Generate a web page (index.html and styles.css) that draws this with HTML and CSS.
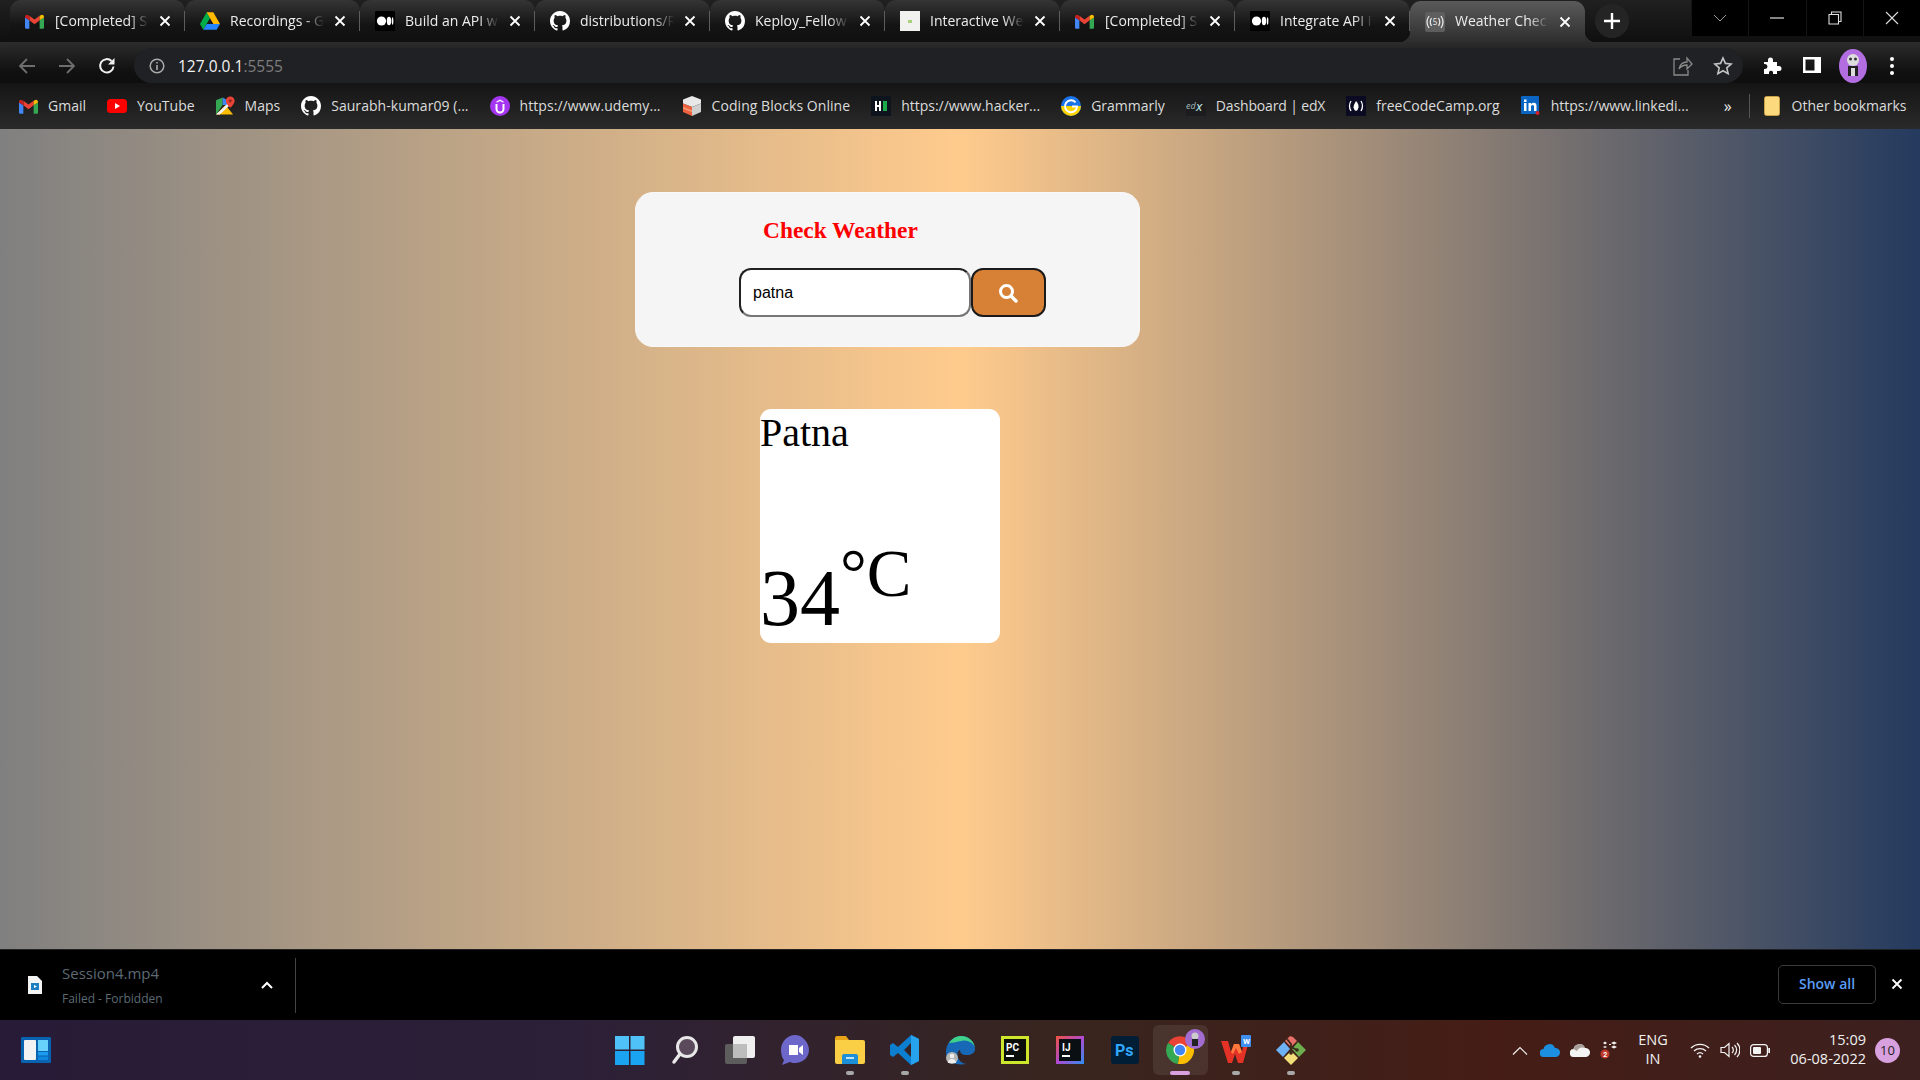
FILE: index.html
```html
<!DOCTYPE html>
<html>
	<head>
		<meta charset="utf-8">
		<title>Weather Check</title>
		<link rel="stylesheet" href="styles.css">
	</head>
	<body>
	<svg class="defs" width="0" height="0">
		<symbol id="gmail" viewBox="0 0 24 18">
			<path fill="#4285f4" d="M0 4v12.5A1.5 1.5 0 0 0 1.5 18h4V7.5z"/>
			<path fill="#34a853" d="M24 4v12.5a1.5 1.5 0 0 1-1.5 1.5h-4V7.5z"/>
			<path fill="#ea4335" d="M5.5 7.5V1.8L12 6.6l6.5-4.8v5.7L12 12.4z"/>
			<path fill="#c5221f" d="M0 4V3a2.5 2.5 0 0 1 4-2l1.5.8v5.7z"/>
			<path fill="#fbbc04" d="M24 4V3a2.5 2.5 0 0 0-4-2l-1.5.8v5.7z"/>
		</symbol>
		<symbol id="drive" viewBox="0 0 24 21">
			<path fill="#00ac47" d="M8 0L0 14l4 7 8-14z"/>
			<path fill="#ffba00" d="M8 0h8l8 14h-8z"/>
			<path fill="#2684fc" d="M4 21h16l4-7H8z"/>
		</symbol>
		<symbol id="medium" viewBox="0 0 20 20">
			<rect width="20" height="20" rx="1" fill="#000"/>
			<circle cx="6.5" cy="10" r="4.6" fill="#fff"/>
			<ellipse cx="14" cy="10" rx="2.2" ry="4.2" fill="#fff"/>
			<ellipse cx="17.6" cy="10" rx=".8" ry="3.8" fill="#fff"/>
		</symbol>
		<symbol id="github" viewBox="0 0 16 16">
			<path fill="#fff" d="M8 0C3.58 0 0 3.58 0 8c0 3.54 2.29 6.53 5.47 7.59.4.07.55-.17.55-.38 0-.19-.01-.82-.01-1.49-2.01.37-2.53-.49-2.69-.94-.09-.23-.48-.94-.82-1.13-.28-.15-.68-.52-.01-.53.63-.01 1.08.58 1.23.82.72 1.21 1.87.87 2.33.66.07-.52.28-.87.51-1.07-1.78-.2-3.64-.89-3.64-3.95 0-.87.31-1.59.82-2.15-.08-.2-.36-1.02.08-2.12 0 0 .67-.21 2.2.82.64-.18 1.32-.27 2-.27.68 0 1.36.09 2 .27 1.53-1.04 2.2-.82 2.2-.82.44 1.1.16 1.92.08 2.12.51.56.82 1.27.82 2.15 0 3.07-1.87 3.75-3.65 3.95.29.25.54.73.54 1.48 0 1.07-.01 1.93-.01 2.2 0 .21.15.46.55.38A8.013 8.013 0 0016 8c0-4.42-3.58-8-8-8z"/>
		</symbol>
		<symbol id="page" viewBox="0 0 20 20">
			<rect width="20" height="20" fill="#f1f1ef"/>
			<rect x="8" y="9" width="4" height="3" fill="#a8cf7a"/>
		</symbol>
		<symbol id="youtube" viewBox="0 0 20 14">
			<rect width="20" height="14" rx="3.5" fill="#f00"/>
			<path fill="#fff" d="M8 4l5 3-5 3z"/>
		</symbol>
		<symbol id="maps" viewBox="0 0 20 20">
			<path fill="#34a853" d="M0 4l7-3v8L0 19z"/>
			<path fill="#fbbc04" d="M0 19L10 9l8 10z"/>
			<path fill="#4285f4" d="M7 1l5 3 0 5-5 0z"/>
			<path fill="#f1f1f1" d="M0 19l18-17v4L4 19z"/>
			<path fill="#ea4335" d="M15 0a4.6 4.6 0 0 0-4.6 4.6C10.4 8 15 12 15 12s4.6-4 4.6-7.4A4.6 4.6 0 0 0 15 0z"/>
			<circle cx="15" cy="4.6" r="1.6" fill="#8f2a20"/>
		</symbol>
		<symbol id="udemy" viewBox="0 0 20 20">
			<circle cx="10" cy="10" r="10" fill="#a435f0"/>
			<path fill="none" stroke="#fff" stroke-width="2" d="M6.5 8v5a3.5 3.5 0 0 0 7 0V8"/>
			<path fill="#fff" d="M10 3.5l3.5 2v1.2L10 5 6.500 6.700V5.500z"/>
		</symbol>
		<symbol id="blocks" viewBox="0 0 20 20">
			<path fill="#e8e8e8" d="M10 0l9 3.500v4L10 11 1 7.500v-4z"/>
			<path fill="#f0623f" d="M1 7.500l9 3.500v9l-9-4z"/>
			<path fill="#f4a27f" d="M1 11l9 3.500V16L1 12.500z"/>
			<path fill="#cfcfcf" d="M19 7.500L10 11v9l9-4z"/>
		</symbol>
		<symbol id="hacker" viewBox="0 0 20 20">
			<rect width="20" height="20" fill="#0e141e"/>
			<path fill="#fff" d="M4 5h2v4h2V5h2v10H8v-4H6v4H4z"/>
			<rect x="12" y="5" width="4" height="10" fill="#1ba94c"/>
		</symbol>
		<symbol id="grammarly" viewBox="0 0 20 20">
			<circle cx="10" cy="10" r="10" fill="#1a73e8"/>
			<path fill="#fbd400" d="M0 10h20a10 10 0 0 1-20 0z"/>
			<path fill="none" stroke="#fff" stroke-width="2" d="M14.500 6.300A6 6 0 1 0 16 10.500H11"/>
		</symbol>
		<symbol id="fcc" viewBox="0 0 20 20">
			<rect width="20" height="20" fill="#0a0a23"/>
			<path fill="none" stroke="#fff" stroke-width="1.300" d="M5 5q-3 5 0 10M15 5q3 5 0 10"/>
			<path fill="#fff" d="M10 5q3 3 2.500 6.500Q12 14 10 15q-2-1-2.500-3.500Q7.500 9 10 5z"/>
		</symbol>
		<symbol id="linkedin" viewBox="0 0 20 20">
			<rect width="18" height="18" rx="1" fill="#0a66c2"/>
			<path fill="#fff" d="M3 7h2.500v8H3zM3 3.500h2.500V6H3zM7.500 7H10v1.200C10.500 7.400 11.500 6.800 12.700 6.800c2.300 0 2.800 1.500 2.800 3.500V15H13v-4.200c0-1-.2-1.900-1.300-1.900S10 9.800 10 10.800V15H7.500z"/>
			<circle cx="16.500" cy="17" r="2" fill="#d5202a"/>
		</symbol>
		<symbol id="folder" viewBox="0 0 16 20">
			<path fill="#fbd97c" stroke="#c9a247" d="M.5 2.500a2 2 0 0 1 2-2h11a2 2 0 0 1 2 2v15a2 2 0 0 1-2 2h-11a2 2 0 0 1-2-2z"/>
		</symbol>
		<symbol id="x" viewBox="0 0 12 12">
			<path stroke="#fff" stroke-width="1.800" d="M1.500 1.500l9 9M10.500 1.500l-9 9"/>
		</symbol>
		<symbol id="search" viewBox="0 0 20 20">
			<circle cx="8.500" cy="8.500" r="6" fill="none" stroke="#fff" stroke-width="3"/>
			<path stroke="#fff" stroke-width="3.400" stroke-linecap="round" d="M13.500 13.500l4.500 4.500"/>
		</symbol>
	</svg>

	<div class="browser">
		<div class="tabstrip">
			<div class="tab"><svg class="fav gm"><use href="#gmail"/></svg><span class="tabname">[Completed] S</span><svg class="tabx"><use href="#x"/></svg></div>
			<div class="tab"><svg class="fav"><use href="#drive"/></svg><span class="tabname">Recordings - G</span><svg class="tabx"><use href="#x"/></svg></div>
			<div class="tab"><svg class="fav"><use href="#medium"/></svg><span class="tabname">Build an API w</span><svg class="tabx"><use href="#x"/></svg></div>
			<div class="tab"><svg class="fav"><use href="#github"/></svg><span class="tabname">distributions/R</span><svg class="tabx"><use href="#x"/></svg></div>
			<div class="tab"><svg class="fav"><use href="#github"/></svg><span class="tabname">Keploy_Fellow</span><svg class="tabx"><use href="#x"/></svg></div>
			<div class="tab"><svg class="fav"><use href="#page"/></svg><span class="tabname">Interactive We</span><svg class="tabx"><use href="#x"/></svg></div>
			<div class="tab"><svg class="fav gm"><use href="#gmail"/></svg><span class="tabname">[Completed] S</span><svg class="tabx"><use href="#x"/></svg></div>
			<div class="tab"><svg class="fav"><use href="#medium"/></svg><span class="tabname">Integrate API i</span><svg class="tabx"><use href="#x"/></svg></div>
			<div class="tab active">
				<svg class="fav" viewBox="0 0 20 20">
					<rect width="20" height="20" rx="2" fill="#5e5e5e"/>
					<path fill="none" stroke="#e8e8e8" stroke-width="1.300" d="M4 4Q0 10 4 16M6.500 6Q4 10 6.500 14M16 4Q20 10 16 16M13.500 6Q16 10 13.500 14"/>
					<text x="10" y="13" text-anchor="middle" font-size="8" font-family="Noto Sans" fill="#e8e8e8">5</text>
				</svg>
				<span class="tabname">Weather Chec</span><svg class="tabx"><use href="#x"/></svg>
			</div>
			<div class="newtab"><svg width="18" height="18" viewBox="0 0 18 18"><path stroke="#fff" stroke-width="2.400" d="M9 1v16M1 9h16"/></svg></div>
			<div class="winbtns">
				<span class="winbtn"><svg width="14" height="8" viewBox="0 0 14 8"><path fill="none" stroke="#999" d="M1 1l6 6 6-6"/></svg></span>
				<span class="winbtn"><svg width="14" height="2" viewBox="0 0 14 2"><path stroke="#ddd" stroke-width="1.200" d="M0 1h14"/></svg></span>
				<span class="winbtn"><svg width="14" height="14" viewBox="0 0 14 14"><path fill="none" stroke="#ddd" stroke-width="1.100" d="M1 3.500h9.500V13H1zM3.500 3.500V1H13v9.500h-2.500"/></svg></span>
				<span class="winbtn"><svg width="14" height="14" viewBox="0 0 14 14"><path stroke="#ddd" stroke-width="1.100" d="M1 1l12 12M13 1L1 13"/></svg></span>
			</div>
		</div>

		<div class="toolbar">
			<svg class="navicon" viewBox="0 0 18 18"><path fill="none" stroke="#6e6e6e" stroke-width="1.800" d="M17 9H2M9 2L2 9l7 7"/></svg>
			<svg class="navicon" viewBox="0 0 18 18"><path fill="none" stroke="#6e6e6e" stroke-width="1.800" d="M1 9h15M9 2l7 7-7 7"/></svg>
			<svg class="navicon" viewBox="0 0 18 18"><path fill="none" stroke="#f0f0f0" stroke-width="2" d="M15.500 9.500A6.700 6.700 0 1 1 13.500 4"/><path fill="#f0f0f0" d="M16.500 1v6.500H10z"/></svg>
			<div class="omnibox">
				<svg class="infoicon" viewBox="0 0 16 16"><circle cx="8" cy="8" r="6.800" fill="none" stroke="#aaa" stroke-width="1.500"/><path stroke="#aaa" stroke-width="1.600" d="M8 7v5M8 4v1.600"/></svg>
				<span class="url">127.0.0.1<span class="port">:5555</span></span>
				<svg class="omniicon share" viewBox="0 0 20 20"><path fill="none" stroke="#8a8a8a" stroke-width="1.300" d="M7 3H1v16h14v-5M6 13c1-5 4-7 8-7V2l5 6-5 5V9c-3 0-6 1-8 4z"/></svg>
				<svg class="omniicon" viewBox="0 0 20 20"><path fill="none" stroke="#c4c4c4" stroke-width="1.600" d="M10 2l2.400 5.400 5.800.6-4.400 3.900 1.300 5.700L10 14.700l-5.100 2.900 1.300-5.700L1.800 8l5.800-.6z"/></svg>
			</div>
			<svg class="toolicon" viewBox="0 0 20 20"><path fill="#fff" d="M2 7h4V5a2.500 2.500 0 0 1 5 0v2h4v4h2a2.500 2.500 0 0 1 0 5h-2v3H11v-2a2.200 2.200 0 0 0-4 0v2H2v-5h1a2.500 2.500 0 0 0 0-5H2z"/></svg>
			<svg class="toolicon" viewBox="0 0 20 20"><path fill="#fff" d="M1 2h18v16H1zM3.500 4.500v11h9v-11z"/></svg>
			<div class="avatar"><svg width="28" height="34" viewBox="0 0 28 34"><ellipse cx="14" cy="17" rx="14" ry="17" fill="#b26ee0"/><circle cx="14" cy="11" r="6" fill="#ddd"/><path fill="#222" d="M9 17h10v10H9z"/><circle cx="11.500" cy="10" r="1.500" fill="#333"/><circle cx="16.500" cy="10" r="1.500" fill="#333"/><path fill="#ddd" d="M12 19h4v8h-4z"/></svg></div>
			<svg class="menuicon" viewBox="0 0 4 18"><circle cx="2" cy="2" r="2" fill="#fff"/><circle cx="2" cy="9" r="2" fill="#fff"/><circle cx="2" cy="16" r="2" fill="#fff"/></svg>
		</div>

		<div class="bookmarks">
			<a class="bm"><svg class="fav gm"><use href="#gmail"/></svg><span>Gmail</span></a>
			<a class="bm"><svg class="fav yt"><use href="#youtube"/></svg><span>YouTube</span></a>
			<a class="bm"><svg class="fav mp"><use href="#maps"/></svg><span>Maps</span></a>
			<a class="bm"><svg class="fav"><use href="#github"/></svg><span class="wide">Saurabh-kumar09 (...</span></a>
			<a class="bm"><svg class="fav"><use href="#udemy"/></svg><span class="wide">https://www.udemy...</span></a>
			<a class="bm"><svg class="fav"><use href="#blocks"/></svg><span class="wide">Coding Blocks Online</span></a>
			<a class="bm"><svg class="fav"><use href="#hacker"/></svg><span>https://www.hacker...</span></a>
			<a class="bm"><svg class="fav"><use href="#grammarly"/></svg><span>Grammarly</span></a>
			<a class="bm">
				<svg class="fav" viewBox="0 0 20 20">
					<rect width="20" height="20" fill="#1c1c1f"/>
					<text x="0" y="13" font-size="9" font-style="italic" font-family="Noto Sans" fill="#9fb3b3">ed</text>
					<text x="10" y="15" font-size="13" font-style="italic" font-family="Noto Sans" fill="#b9e5e5">x</text>
				</svg>
				<span class="tight">Dashboard | edX</span>
			</a>
			<a class="bm"><svg class="fav"><use href="#fcc"/></svg><span>freeCodeCamp.org</span></a>
			<a class="bm"><svg class="fav"><use href="#linkedin"/></svg><span>https://www.linkedi...</span></a>
			<span class="more">&raquo;</span>
			<span class="bmsep"></span>
			<a class="bm folderbm"><svg class="fav fd"><use href="#folder"/></svg><span>Other bookmarks</span></a>
		</div>

		<main class="page">
			<section class="panel">
				<h2 class="panel-title">Check Weather</h2>
				<form class="search">
					<input class="search-input" type="text" value="patna">
					<button class="search-btn" type="button"><svg width="20" height="20"><use href="#search"/></svg></button>
				</form>
			</section>
			<section class="result">
				<div class="city">Patna</div>
				<div class="temp">34<span class="unit">&deg;C</span></div>
			</section>
		</main>

		<div class="downloads">
			<svg class="dlfile" width="14" height="18" viewBox="0 0 14 18"><path fill="#f4f4f4" d="M0 0h9l5 5v13H0z"/><path fill="#1c7fc4" d="M3 7h8v7H3z"/><path fill="#fff" d="M6 9l3 1.500L6 12z"/></svg>
			<div class="dlinfo">
				<div class="dlname">Session4.mp4</div>
				<div class="dlstatus">Failed - Forbidden</div>
			</div>
			<svg class="dlcaret" width="12" height="8" viewBox="0 0 12 8"><path fill="none" stroke="#fff" stroke-width="2" d="M1 7l5-5 5 5"/></svg>
			<span class="dlsep"></span>
			<a class="showall">Show all</a>
			<svg class="dlclose"><use href="#x"/></svg>
		</div>

		<div class="taskbar">
			<div class="widgets">
				<svg width="30" height="26" viewBox="0 0 30 26"><rect width="30" height="26" rx="1" fill="#0a63b0"/><rect x="3" y="3" width="12" height="20" rx="1" fill="#f2f2f2"/><rect x="17" y="3" width="10" height="11" fill="#67d0fb"/><rect x="17" y="15" width="10" height="3.500" fill="#1c9cf0"/><rect x="17" y="19.500" width="10" height="3.500" fill="#0f86e0"/></svg>
			</div>
			<div class="apps">
				<span class="app"><svg width="30" height="30" viewBox="0 0 30 30"><path fill="#4fc3f7" d="M0 1h14v13.500H0zM15.500 1H29.500v13.500H15.500z"/><path fill="#1aa3f0" d="M0 16h14v14H0zM15.500 16H29.500v14H15.500z"/></svg></span>
				<span class="app"><svg width="30" height="30" viewBox="0 0 30 30"><circle cx="17" cy="12" r="9.500" fill="#5a4a5c" stroke="#e8e8e8" stroke-width="3"/><path stroke="#e8e8e8" stroke-width="3.500" stroke-linecap="round" d="M10 19l-6 8"/></svg></span>
				<span class="app"><svg width="32" height="30" viewBox="0 0 32 30"><rect x="9" y="1" width="22" height="22" rx="2" fill="#efefef"/><rect x="1" y="9" width="22" height="20" rx="2" fill="#5d5d5d"/><rect x="9" y="9" width="14" height="14" fill="#bdbdbd"/></svg></span>
				<span class="app"><svg width="30" height="32" viewBox="0 0 30 32"><path fill="#6c67c8" d="M15 1C7 1 1 8 1 16c0 4 1 8 3 10l-2 5 8-3c2 1 3 1 5 1 8 0 14-6 14-13S23 1 15 1z"/><path fill="#fff" d="M9 11h9v10H9zM19 14l4-3v10l-4-3z"/></svg></span>
				<span class="app dot"><svg width="30" height="28" viewBox="0 0 30 28"><path fill="#e8a317" d="M0 2a2 2 0 0 1 2-2h9l3 4H0z"/><path fill="#fbcf45" d="M0 4h28a2 2 0 0 1 2 2v20a2 2 0 0 1-2 2H2a2 2 0 0 1-2-2z"/><path fill="#1b8fd8" d="M7 20a2 2 0 0 1 2-2h12a2 2 0 0 1 2 2v8H7z"/><rect x="11" y="21" width="8" height="2" fill="#bfe4f9"/></svg></span>
				<span class="app dot"><svg width="30" height="30" viewBox="0 0 30 30"><path fill="#0d7fd0" d="M21 0l8 4v22l-8 4-13-12-5 4-3-2v-10l3-2 5 4zM21 8l-7 7 7 7z"/><path fill="#27a3ee" d="M21 0l8 4v22l-8 4z"/></svg></span>
				<span class="app"><svg width="30" height="30" viewBox="0 0 30 30"><path fill="#1769b8" d="M1 17C1 7 9 1 16 1c8 0 14 6 14 13 0 4-4 6-8 6-5 0-7-2-7-5-3 1-4 6 0 11 1 1 4 3 7 3-11 2-21-2-21-12z"/><path fill="#3fd08a" d="M4 8C8 2 13 1 16 1c8 0 14 6 14 13 0-6-8-10-14-8-5 1-9 2-12 2z"/><circle cx="7" cy="23" r="6" fill="#b5b5b5"/><circle cx="7" cy="21" r="2.300" fill="#eee"/><path fill="#eee" d="M3 28a4 4 0 0 1 8 0z"/></svg></span>
				<span class="app"><svg width="28" height="28" viewBox="0 0 28 28"><rect width="28" height="28" fill="#cde62c"/><rect x="3" y="3" width="22" height="22" fill="#0a0f0a"/><text x="5" y="15" font-size="10" font-weight="700" font-family="Roboto" fill="#fff">PC</text><rect x="5" y="19" width="8" height="2" fill="#fff"/></svg></span>
				<span class="app"><svg width="28" height="28" viewBox="0 0 28 28"><defs><linearGradient id="ij" x1="0" y1="0" x2="1" y2="1"><stop offset="0" stop-color="#f0533f"/><stop offset=".5" stop-color="#b04ad0"/><stop offset="1" stop-color="#2b8ff0"/></linearGradient></defs><rect width="28" height="28" fill="url(#ij)"/><rect x="3" y="3" width="22" height="22" fill="#0a0f14"/><text x="6" y="15" font-size="10" font-weight="700" font-family="Roboto" fill="#fff">IJ</text><rect x="6" y="19" width="8" height="2" fill="#fff"/></svg></span>
				<span class="app"><svg width="28" height="28" viewBox="0 0 28 28"><rect width="28" height="28" rx="3" fill="#001e36"/><text x="4" y="20" font-size="16" font-weight="700" font-family="Roboto" fill="#31a8ff">Ps</text></svg></span>
				<span class="app current"><svg width="28" height="28" viewBox="0 0 28 28"><path fill="#ea4335" d="M14 14L2 7a14 14 0 0 1 24 0z"/><path fill="#34a853" d="M14 14L2 7a14 14 0 0 0 10 21z"/><path fill="#fbbc04" d="M14 14l12-7a14 14 0 0 1-14 21z"/><circle cx="14" cy="14" r="6.500" fill="#fff"/><circle cx="14" cy="14" r="5.200" fill="#4285f4"/></svg><svg class="chromebadge" width="20" height="20" viewBox="0 0 20 20"><circle cx="10" cy="10" r="10" fill="#a26cd0"/><circle cx="10" cy="7" r="3.500" fill="#ccc"/><rect x="7" y="10" width="6" height="7" fill="#222"/></svg></span>
				<span class="app dot"><svg width="30" height="30" viewBox="0 0 30 30"><path fill="#e53226" d="M0 6h7l3 11 3-8h5l3 8 2-11h5l-6 22h-5l-3-9-3 9H7z"/><path fill="#ff7a3c" d="M10 17l3-8h5l3 8-3 2-3-6-3 6z"/><rect x="20" y="0" width="10" height="12" rx="1" fill="#3f8ff0"/><text x="22" y="9" font-size="8" font-weight="700" font-family="Roboto" fill="#fff">W</text></svg></span>
				<span class="app dot"><svg width="30" height="30" viewBox="0 0 30 30"><path fill="#e8706a" d="M9 6l5-5 3 1 4 4-6 6z"/><path fill="#6fb1f5" d="M0 15l8-8 6 7-7 8z"/><path fill="#6fae4f" d="M16 14l6-7 8 8-7 7z"/><path fill="#f3df7a" d="M8 23l7-7 7 7-7 7z"/><path fill="none" stroke="#3a2a1a" stroke-width="1.800" d="M11 4l4 5v9M15 12l6 3"/><circle cx="15" cy="18" r="1.800" fill="#3a2a1a"/><circle cx="21" cy="15" r="1.800" fill="#3a2a1a"/></svg></span>
			</div>
			<div class="tray">
				<svg width="16" height="9" viewBox="0 0 16 9"><path fill="none" stroke="#f0f0f0" stroke-width="1.200" d="M1 8.500l7-7 7 7"/></svg>
				<svg class="cloud1" width="20" height="13" viewBox="0 0 20 13"><path fill="#1d8fe0" d="M4 13a4 4 0 0 1-.5-8A6 6 0 0 1 15 4a4.500 4.500 0 0 1 1 9z"/></svg>
				<svg class="cloud2" width="20" height="13" viewBox="0 0 20 13"><path fill="#f4f4f4" d="M4 13a4 4 0 0 1-.5-8A6 6 0 0 1 15 4a4.500 4.500 0 0 1 1 9z"/><path fill="#a89d99" d="M3.500 5A6 6 0 0 1 15 4a6 6 0 0 0-8 3z"/></svg>
				<svg class="slack" width="18" height="18" viewBox="0 0 18 18"><path fill="#eee" d="M3 2l2-1.500L7 2 5 3.500zM11 2l3-1.500L17 2l-3 1.500zM11 6l3-1.500L17 6l-3 1.500zM9 3h2v1H9zM3 6l2-1 2 1-2 1z"/><circle cx="5" cy="13" r="4.500" fill="#c0392b"/><text x="3.200" y="15.500" font-size="7" font-weight="700" font-family="Roboto" fill="#fff">2</text></svg>
				<div class="lang"><div>ENG</div><div>IN</div></div>
				<svg class="wifi" width="20" height="16" viewBox="0 0 20 16"><path fill="none" stroke="#f4f4f4" stroke-width="1.300" d="M1 6a13 13 0 0 1 18 0M4 9a9 9 0 0 1 12 0M7 12a4.500 4.500 0 0 1 6 0"/><circle cx="10" cy="14.500" r="1.300" fill="#f4f4f4"/></svg>
				<svg class="vol" width="20" height="16" viewBox="0 0 20 16"><path fill="none" stroke="#f4f4f4" stroke-width="1.200" d="M1 5.500h3.500L9 1.500v13L4.500 10.500H1zM12 5a4 4 0 0 1 0 6M14.500 3a7 7 0 0 1 0 10M17 1a10 10 0 0 1 0 14"/></svg>
				<svg class="batt" width="20" height="13" viewBox="0 0 20 13"><rect x=".6" y=".6" width="16.800" height="11.800" rx="3" fill="none" stroke="#f4f4f4" stroke-width="1.200"/><rect x="3" y="3" width="8" height="7" rx="1" fill="#f4f4f4"/><rect x="18.300" y="4" width="1.700" height="5" fill="#f4f4f4"/></svg>
				<div class="clock"><div>15:09</div><div>06-08-2022</div></div>
				<span class="notif">10</span>
			</div>
		</div>
	</div>
	</body>
</html>
```

FILE: styles.css
```css
* {margin: 0;padding: 0;box-sizing: border-box;}
html, body {height: 100%;overflow: hidden;}
body {font-family: "Open Sans", "Noto Sans", sans-serif;background: #000;}
.defs {display: block;height: 0;}
svg {display: block;flex: none;}

.browser {
	height: 1080px;
	display: flex;
	flex-direction: column;
}

/* tabs */
.tabstrip {
	height: 42px;
	display: flex;
	padding-left: 10px;
	background: linear-gradient(#202020, #0f0f0f);
	flex: none;
}
.tab {
	width: 175px;
	height: 42px;
	display: flex;
	align-items: center;
	padding: 0 14px 0 15px;
	border-radius: 11px 11px 0 0;
	background: linear-gradient(#353535, #141414 60%, #101010);
	color: #ececec;
	font-size: 14px;
	position: relative;
}
.tab:not(.active)::after {
	content: "";
	position: absolute;
	right: 0;
	top: 11px;
	height: 20px;
	width: 1px;
	background: #5c5c5c;
}
.tab.active {
	background: linear-gradient(#5a5a5a, #2e2e2e);
	margin-top: 1px;
	height: 41px;
}
/* flares at the foot of the open tab */
.tab.active::before, .tab.active::after {
	content: "";
	position: absolute;
	bottom: 0;
	width: 11px;
	height: 11px;
}
.tab.active::before {
	left: -11px;
	background: radial-gradient(circle at 0 0, transparent 11px, #2e2e2e 11.500px);
}
.tab.active::after {
	right: -11px;
	background: radial-gradient(circle at 100% 0, transparent 11px, #2e2e2e 11.500px);
}
.fav {width: 20px;height: 20px;}
.fav.gm {width: 19px;height: 15px;}
.fav.yt {width: 20px;height: 14px;}
.fav.mp {width: 19px;height: 20px;}
.fav.fd {width: 16px;height: 20px;}
.tabname {
	width: 100px;
	margin-left: 10px;
	padding-bottom: 2px;
	white-space: nowrap;
	-webkit-mask-image: linear-gradient(to right, #000 74%, transparent 94%);
	mask-image: linear-gradient(to right, #000 74%, transparent 94%);
}
.tab .gm + .tabname {margin-left: 11px;}
.tabx {width: 12px;height: 12px;margin-left: auto;}
.newtab {
	width: 34px;
	height: 34px;
	margin: 4px 0 0 10px;
	border-radius: 50%;
	background: #242424;
	display: flex;
	align-items: center;
	justify-content: center;
}
.winbtns {
	margin-left: auto;
	height: 36px;
	width: 229px;
	background: #000;
	display: flex;
}
.winbtn {
	flex: 1;
	display: flex;
	align-items: center;
	justify-content: center;
	border-left: 1px solid #141414;
}

/* toolbar */
.toolbar {
	height: 41px;
	flex: none;
	display: flex;
	align-items: flex-end;
	padding-left: 18px;
	background: linear-gradient(#2c2c2c, #111 70%, #0e0e0e);
}
.navicon {width: 18px;height: 18px;margin: 0 22px 8px 0;}
.navicon:nth-child(3) {margin-right: 18px;}
.omnibox {
	width: 1609px;
	height: 35px;
	border-radius: 18px;
	background: #202124;
	display: flex;
	align-items: center;
	padding: 0 10px 0 15px;
}
.infoicon {width: 16px;height: 16px;}
.url {margin-left: 13px;font-size: 15.5px;color: #f2f2f2;}
.port {color: #7d7d7d;}
.omniicon {width: 20px;height: 20px;}
.share {margin-left: auto;margin-right: 20px;}
.toolicon {width: 20px;height: 20px;margin: 0 0 8px 19px;}
.toolicon + .toolicon {margin-left: 20px;}
.avatar {margin: 0 0 0 17px;}
.menuicon {width: 4px;height: 18px;margin: 0 0 8px 23px;}

/* bookmarks */
.bookmarks {
	height: 46px;
	flex: none;
	display: flex;
	align-items: center;
	gap: 21px;
	padding-left: 19px;
	background: linear-gradient(#151515, #2a2a2a);
	color: #dcdcdc;
	font-size: 14px;
	white-space: nowrap;
}
.bm {display: flex;align-items: center;gap: 10px;}
.bm span {padding-bottom: 2px;}
.bm .wide {letter-spacing: .05px;}
.bm .tight {letter-spacing: -.15px;}
.more {font-size: 16px;margin-left: 14px;color: #eee;}
.bmsep {width: 1px;height: 24px;background: #555;margin-left: -4px;margin-right: -7px;}
.folderbm {gap: 12px;}

/* page */
.page {
	flex: 1;
	padding: 63px 0 0 635px;
	background: linear-gradient(to right, #808080, #ffcb8d 50%, #243a5e);
}
.panel {
	width: 505px;
	height: 155px;
	background: #f5f5f5;
	border: 1px solid #f8f8f8;
	border-radius: 18px;
	padding-top: 24px;
}
.panel-title {
	font: bold 23.400px "Liberation Serif", serif;
	color: #f00;
	margin-left: 127px;
}
.search {
	display: flex;
	margin: 24px 0 0 103px;
}
.search-input {
	width: 232px;
	height: 49px;
	border: 2px inset #767676;
	border-radius: 12px;
	padding-left: 12px;
	font: 16px "Liberation Sans", sans-serif;
	background: #fff;
	color: #000;
}
.search-btn {
	width: 75px;
	height: 49px;
	border: 2px solid #1a1a1a;
	border-radius: 12px;
	background: #d68135;
	display: flex;
	align-items: center;
	justify-content: center;
	padding-right: 1px;
}
.result {
	width: 240px;
	height: 234px;
	margin: 62px 0 0 125px;
	background: #fff;
	border-radius: 11px;
	font-family: "Liberation Serif", serif;
	color: #000;
}
.city {font-size: 40px;line-height: 46px;padding-top: 1px;}
.temp {font-size: 80px;line-height: 92px;margin-top: 96px;}
.unit {font-size: 67px;vertical-align: 29px;line-height: 0;}

/* download bar */
.downloads {
	height: 71px;
	flex: none;
	background: #000;
	border-top: 1px solid #222;
	display: flex;
	align-items: center;
	padding-left: 28px;
}
.dlinfo {margin-left: 20px;width: 200px;padding-top: 2px;}
.dlname {font-size: 15px;color: #5d6a74;line-height: 20px;margin-top: -2px;}
.dlstatus {font-size: 12px;color: #5d6a74;line-height: 17px;margin-top: 7px;}
.dlcaret {margin-left: -1px;}
.dlsep {width: 1px;height: 55px;background: #444;margin-left: 22px;}
.showall {
	margin: 0 0 2px auto;
	width: 98px;
	height: 39px;
	border: 1px solid #3a3a3a;
	border-radius: 5px;
	color: #5b9cf5;
	font-size: 14px;
	font-weight: 600;
	padding-bottom: 2px;
	display: flex;
	align-items: center;
	justify-content: center;
}
.dlclose {width: 12px;height: 12px;margin: 0 17px 2px 15px;}

/* taskbar */
.taskbar {
	height: 60px;
	flex: none;
	display: flex;
	align-items: center;
	background: linear-gradient(to right, #271b37, #2c2038 30%, #38251f 55%, #451d16 78%, #3c201f);
}
.widgets {width: 602px;padding-left: 21px;}
.apps {display: flex;}
.app {
	width: 55.100px;
	height: 50px;
	display: flex;
	align-items: center;
	justify-content: center;
	position: relative;
}
.app.dot::after, .app.current::after {
	content: "";
	position: absolute;
	bottom: 0;
	left: 50%;
	width: 8px;
	height: 4px;
	margin-left: -4px;
	border-radius: 2px;
	background: #a8a8a8;
}
.app.current {background: rgba(255,255,255,0.08);border-radius: 6px;}
.app.current::after {width: 20px;margin-left: -10px;background: #d9a0e0;}
.chromebadge {position: absolute;right: 3px;top: 4px;}
.tray {
	margin-left: auto;
	display: flex;
	align-items: center;
	color: #f0f0f0;
	font-size: 14.500px;
	line-height: 19px;
	padding-right: 20px;
}
.cloud1 {margin-left: 12px;}
.cloud2 {margin-left: 10px;}
.slack {margin-left: 10px;}
.lang {text-align: center;margin: -2px 0 0 17px;width: 36px;}
.wifi {margin-left: 19px;}
.vol {margin-left: 10px;}
.batt {margin-left: 10px;}
.clock {text-align: right;margin: -2px 0 0 19px;width: 77px;white-space: nowrap;}
.notif {
	width: 25px;
	height: 25px;
	margin-left: 9px;
	border-radius: 50%;
	background: #d9a0e0;
	color: #222;
	font-size: 13px;
	display: flex;
	align-items: center;
	justify-content: center;
}
```
